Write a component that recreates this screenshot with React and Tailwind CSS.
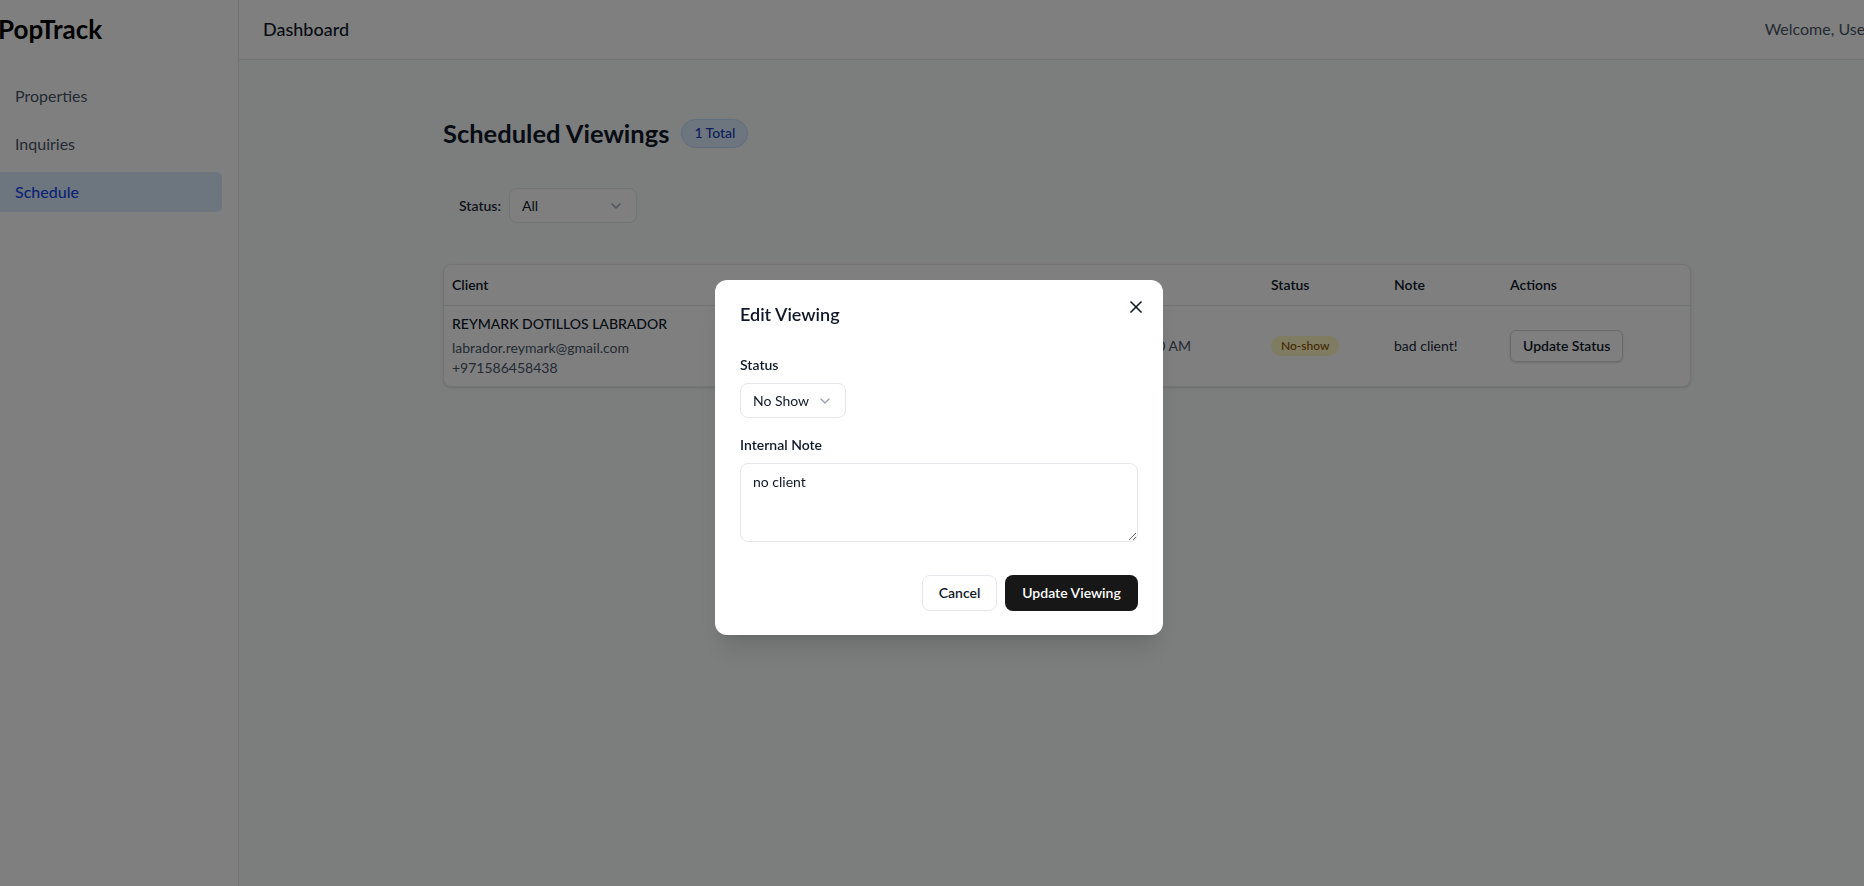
import React from "react";
import { X, ChevronDown } from "lucide-react";

export default function App() {
  return (
    <div className="relative flex h-screen w-screen overflow-hidden bg-white font-['Lato',sans-serif] text-gray-900">
      {/* Sidebar */}
      <aside className="w-[239px] shrink-0 border-r border-gray-200 bg-white">
        <div className="flex h-[59px] items-center">
          <span className="-ml-[2px] text-[26px] font-bold text-black">PopTrack</span>
        </div>
        <nav className="flex flex-col gap-2 pt-[17px] pr-4">
          <a className="flex h-10 items-center px-[15px] text-base text-gray-600">Properties</a>
          <a className="flex h-10 items-center px-[15px] text-base text-gray-600">Inquiries</a>
          <a className="flex h-10 items-center rounded-r-md bg-blue-100 px-[15px] text-base font-medium text-blue-700">Schedule</a>
        </nav>
      </aside>

      {/* Main column */}
      <div className="flex min-w-[1656px] flex-1 flex-col bg-gray-50">
        <header className="flex h-[60px] shrink-0 items-center justify-between border-b border-gray-200 bg-white px-6 pb-[2px]">
          <span className="text-lg font-medium text-gray-900">Dashboard</span>
          <span className="text-base text-gray-600">Welcome, User</span>
        </header>

        <main className="mx-auto w-full max-w-7xl px-4 pt-[57px]">
          <div className="flex items-center gap-3">
            <h1 className="text-[25.5px] font-bold leading-8 text-gray-900">Scheduled Viewings</h1>
            <span className="flex h-[29px] items-center rounded-full border border-blue-200 bg-blue-100 px-3 text-sm font-medium text-blue-800">1 Total</span>
          </div>

          <div className="mt-[39px] flex items-center gap-2 pl-4">
            <span className="text-sm font-semibold text-gray-800">Status:</span>
            <div className="flex h-[35px] w-[128px] items-center justify-between rounded-lg border border-gray-200 bg-white px-3 text-sm text-gray-900">
              <span>All</span>
              <ChevronDown size={16} className="text-gray-400" />
            </div>
          </div>

          <div className="mt-[41px] overflow-hidden rounded-lg border border-gray-200 bg-white shadow-sm">
            <table className="w-full table-fixed border-collapse text-left text-sm">
              <colgroup>
                <col className="w-[280px]" />
                <col className="w-[306px]" />
                <col className="w-[233px]" />
                <col className="w-[123px]" />
                <col className="w-[116px]" />
                <col />
              </colgroup>
              <thead>
                <tr className="h-10 border-b border-gray-200">
                  <th className="px-2 font-semibold text-gray-900">Client</th>
                  <th className="px-2 font-semibold text-gray-900">Property</th>
                  <th className="px-2 font-semibold text-gray-900">Date &amp; Time</th>
                  <th className="px-2 font-semibold text-gray-900">Status</th>
                  <th className="px-2 font-semibold text-gray-900">Note</th>
                  <th className="px-2 font-semibold text-gray-900">Actions</th>
                </tr>
              </thead>
              <tbody>
                <tr>
                  <td className="px-2 py-2 align-middle">
                    <div className="font-medium leading-5 text-gray-900">REYMARK DOTILLOS LABRADOR</div>
                    <div className="mt-[4px] leading-5 text-gray-600">labrador.reymark@gmail.com</div>
                    <div className="leading-5 text-gray-600">+971586458438</div>
                  </td>
                  <td className="px-2 py-2 text-gray-700">Marina Heights Tower, Apt 1204</td>
                  <td className="py-2 pr-[72px] text-right text-gray-600">Jan 10, 2026, 10:00 AM</td>
                  <td className="px-2 py-2">
                    <span className="inline-flex h-5 items-center rounded-full bg-yellow-100 px-2.5 text-xs font-medium text-yellow-800">No-show</span>
                  </td>
                  <td className="px-2 py-2 text-gray-800">bad client!</td>
                  <td className="px-2 py-2">
                    <button className="h-8 rounded-md border border-gray-300 bg-white px-3 text-sm font-semibold text-gray-900 shadow-sm">Update Status</button>
                  </td>
                </tr>
              </tbody>
            </table>
          </div>
        </main>
      </div>

      {/* Modal overlay */}
      <div className="fixed inset-0 flex items-center justify-center bg-black/50 pl-[14px] pt-[29px]">
        <div className="relative w-[448px] rounded-xl bg-white px-[25px] pb-[24px] pt-[20px] shadow-xl">
          <button className="absolute right-[17px] top-[17px] text-gray-900">
            <X size={20} strokeWidth={2} />
          </button>
          <h2 className="text-lg font-semibold leading-7 text-gray-900">Edit Viewing</h2>

          <label className="mt-[27px] block text-sm font-semibold leading-5 text-gray-900">Status</label>
          <div className="mt-2 inline-flex h-[35px] items-center gap-2 rounded-lg border border-gray-200 bg-white px-3 text-sm text-gray-900">
            <span>No Show</span>
            <ChevronDown size={16} className="text-gray-400" />
          </div>

          <label className="mt-[17px] block text-sm font-semibold leading-5 text-gray-900">Internal Note</label>
          <textarea
            className="mt-2 block h-[79px] w-full rounded-lg border border-gray-200 px-3 py-2 text-sm leading-5 text-gray-900 outline-none"
            defaultValue="no client"
          />

          <div className="mt-[33px] flex justify-end gap-2">
            <button className="h-9 w-[75px] rounded-lg border border-gray-200 bg-white text-sm font-semibold text-gray-900">Cancel</button>
            <button className="h-9 w-[133px] rounded-lg bg-neutral-900 text-sm font-semibold text-white">Update Viewing</button>
          </div>
        </div>
      </div>
    </div>
  );
}
